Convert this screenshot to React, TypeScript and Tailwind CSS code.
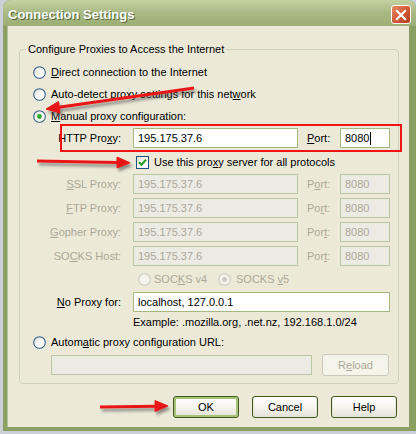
import React, { useId } from "react";

function U({ children }: { children: React.ReactNode }) {
  return <span className="underline underline-offset-[1px] decoration-1">{children}</span>;
}

function Radio({ checked = false, disabled = false }: { checked?: boolean; disabled?: boolean }) {
  const id = useId().replace(/:/g, "");
  return (
    <svg width="13" height="13" viewBox="0 0 13 13" className="shrink-0">
      <defs>
        <linearGradient id={`g${id}`} x1="0" y1="0" x2="1" y2="1">
          <stop offset="0" stopColor="#DCD9CB" />
          <stop offset="0.6" stopColor="#FFFFFF" />
          <stop offset="1" stopColor="#FFFFFF" />
        </linearGradient>
      </defs>
      <circle
        cx="6.5"
        cy="6.5"
        r="5.8"
        fill={disabled ? "#F4F3EC" : `url(#g${id})`}
        stroke={disabled ? "#CAC8BB" : "#33628A"}
        strokeWidth="1.1"
      />
      {checked && <circle cx="6.5" cy="6.5" r="2.4" fill={disabled ? "#CAC8BB" : "#2EA82E"} />}
    </svg>
  );
}

function Checkbox() {
  return (
    <svg width="13" height="13" viewBox="0 0 13 13" className="shrink-0">
      <defs>
        <linearGradient id="cbg" x1="0" y1="0" x2="1" y2="1">
          <stop offset="0" stopColor="#DCD9CB" />
          <stop offset="0.6" stopColor="#FFFFFF" />
        </linearGradient>
      </defs>
      <rect x="0.5" y="0.5" width="12" height="12" fill="url(#cbg)" stroke="#1C5180" />
      <path d="M3 6.3 L5.4 8.8 L10 3.8" fill="none" stroke="#21A121" strokeWidth="2" />
    </svg>
  );
}

function Field({ text, w, disabled = false, caret = false }: { text: string; w: string; disabled?: boolean; caret?: boolean }) {
  return (
    <div
      className={`${w} h-[20px] shrink-0 flex items-center pl-[4px] border ${
        disabled ? "bg-[#EBEBE4] border-[#B9C7A2] text-[#ACA899]" : "bg-white border-[#A4B97F] text-black"
      }`}
    >
      <span>{text}</span>
      {caret && <span className="inline-block w-[1px] h-[13px] bg-black ml-[1px]" />}
    </div>
  );
}

function Label({ children, disabled = false }: { children: React.ReactNode; disabled?: boolean }) {
  return (
    <div className={`w-[82px] shrink-0 text-right pr-[2px] ${disabled ? "text-[#ACA899]" : "text-black"}`}>{children}</div>
  );
}

function ProxyRow({
  label,
  port,
  disabled = false,
  caret = false,
  cls = "",
}: {
  label: React.ReactNode;
  port: React.ReactNode;
  disabled?: boolean;
  caret?: boolean;
  cls?: string;
}) {
  return (
    <div className={`flex items-center h-[22px] pl-[21px] ${cls}`}>
      <Label disabled={disabled}>{label}</Label>
      <div className="ml-[10px]">
        <Field text="195.175.37.6" w="w-[165px]" disabled={disabled} />
      </div>
      <div className={`ml-[9px] w-[33px] ${disabled ? "text-[#ACA899]" : "text-black"}`}>{port}</div>
      <Field text="8080" w="w-[50px]" disabled={disabled} caret={caret} />
    </div>
  );
}

function Button({ children, def = false }: { children: React.ReactNode; def?: boolean }) {
  return (
    <div
      className={`w-[66px] h-[22px] flex items-center justify-center rounded-[3px] border border-[#3F5A1C] bg-gradient-to-b from-[#FFFFFF] via-[#F6F5EF] to-[#E3E1D6] text-black ${
        def ? "shadow-[inset_0_0_0_2px_#A9C27A]" : "shadow-[inset_0_-1px_0_1px_#E6E4DA]"
      }`}
    >
      {children}
    </div>
  );
}

export default function App() {
  return (
    <div className="relative w-[416px] h-[434px] overflow-hidden bg-[#C9D0D8] font-['Liberation_Sans',Arial,sans-serif] text-[11px] leading-[13px] text-black">
      <div className="ml-[3px] w-[413px] h-[431px] flex flex-col rounded-t-[8px] bg-[#8AA063]">
        {/* Title bar */}
        <div className="h-[26px] shrink-0 flex items-start justify-between rounded-t-[8px] bg-gradient-to-b from-[#C5D1A2] via-[#A8B983] to-[#9CAE74] pl-[5px] pr-[5px]">
          <div className="pt-[7px] text-[13px] leading-[15px] font-bold text-white [text-shadow:1px_1px_0_#56693A]">
            Connection Settings
          </div>
          <div className="mt-[5px] w-[20px] h-[19px] rounded-[3px] border border-white bg-gradient-to-br from-[#E88B68] via-[#D25A37] to-[#B2401F] flex items-center justify-center">
            <svg width="12" height="12" viewBox="0 0 12 12">
              <path d="M2 2 L10 10 M10 2 L2 10" stroke="white" strokeWidth="2.2" strokeLinecap="square" />
            </svg>
          </div>
        </div>
        {/* Body */}
        <div className="ml-[4px] mr-[7px] mb-[4px] flex-1 bg-[#ECE9D8] flex flex-col pt-[16px] pl-[11px] border-l border-[#B4C49A]">
          <fieldset className="w-[380px] h-[342px] m-0 p-0 border border-[#D0D0BF] rounded-[4px] flex flex-col">
            <legend className="ml-[6px] px-[2px] leading-[14px]">Configure Proxies to Access the Internet</legend>
            <div className="flex items-center h-[22px] pl-[13px] gap-[5px] mt-[5px]">
              <Radio />
              <span>
                <U>D</U>irect connection to the Internet
              </span>
            </div>
            <div className="flex items-center h-[22px] pl-[13px] gap-[5px]">
              <Radio />
              <span>
                Auto-detect proxy settings for this net<U>w</U>ork
              </span>
            </div>
            <div className="flex items-center h-[22px] pl-[13px] gap-[5px]">
              <Radio checked />
              <span>
                <U>M</U>anual proxy configuration:
              </span>
            </div>
            <ProxyRow
              label={
                <>
                  HTTP Pro<U>x</U>y:
                </>
              }
              port={
                <>
                  <U>P</U>ort:
                </>
              }
              caret
            />
            <div className="flex items-center h-[22px] pl-[116px] gap-[5px] mt-[2px]">
              <Checkbox />
              <span>
                Use this pro<U>x</U>y server for all protocols
              </span>
            </div>
            <ProxyRow
              disabled
              label={
                <>
                  <U>S</U>SL Proxy:
                </>
              }
              port={
                <>
                  P<U>o</U>rt:
                </>
              }
            />
            <ProxyRow
              disabled
              cls="mt-[2px]"
              label={
                <>
                  <U>F</U>TP Proxy:
                </>
              }
              port={
                <>
                  Po<U>r</U>t:
                </>
              }
            />
            <ProxyRow
              disabled
              cls="mt-[2px]"
              label={
                <>
                  <U>G</U>opher Proxy:
                </>
              }
              port={
                <>
                  Por<U>t</U>:
                </>
              }
            />
            <ProxyRow
              disabled
              cls="mt-[2px]"
              label={
                <>
                  SO<U>C</U>KS Host:
                </>
              }
              port={
                <>
                  Por<U>t</U>:
                </>
              }
            />
            <div className="flex items-center h-[22px] pl-[118px] mt-[1px] text-[#ACA899]">
              <div className="w-[80px] flex items-center gap-[3px]">
                <Radio disabled />
                <span>
                  SOC<U>K</U>S v4
                </span>
              </div>
              <div className="flex items-center gap-[5px]">
                <Radio disabled checked />
                <span>
                  SOCKS <U>v</U>5
                </span>
              </div>
            </div>
            <div className="flex items-center h-[22px] pl-[21px] mt-[1px]">
              <Label>
                <U>N</U>o Proxy for:
              </Label>
              <div className="ml-[10px]">
                <Field text="localhost, 127.0.0.1" w="w-[257px]" />
              </div>
            </div>
            <div className="flex items-center h-[18px] pl-[113px]">
              Example: .mozilla.org, .net.nz, 192.168.1.0/24
            </div>
            <div className="flex items-center h-[22px] pl-[13px] gap-[5px]">
              <Radio />
              <span>
                Autom<U>a</U>tic proxy configuration URL:
              </span>
            </div>
            <div className="flex items-center h-[22px] pl-[31px] mt-[1px]">
              <Field text="" w="w-[261px]" disabled />
              <div className="ml-[10px] w-[67px] h-[22px] flex items-center justify-center rounded-[3px] border border-[#CAC8BB] bg-[#F5F4EA] text-[#ACA899]">
                R<U>e</U>load
              </div>
            </div>
          </fieldset>
          <div className="flex justify-end gap-[13px] pr-[12px] mt-[12px]">
            <Button def>OK</Button>
            <Button>Cancel</Button>
            <Button>Help</Button>
          </div>
        </div>
      </div>

      {/* Annotations */}
      <div className="absolute left-[60px] top-[124px] w-[342px] h-[28px] border-2 border-[#F01414] pointer-events-none" />
      <svg className="absolute left-0 top-0 pointer-events-none" width="416" height="434" viewBox="0 0 416 434">
        <defs>
          <filter id="sh" x="-20%" y="-50%" width="140%" height="250%">
            <feDropShadow dx="2" dy="3" stdDeviation="1.5" floodColor="#404040" floodOpacity="0.55" />
          </filter>
        </defs>
        <g filter="url(#sh)" fill="#E81818" stroke="#E81818">
          <line x1="194" y1="88" x2="57" y2="107.5" strokeWidth="3" />
          <polygon points="46,109 60,113 58.5,101.5" strokeWidth="1" />
          <line x1="37" y1="161" x2="118" y2="162.5" strokeWidth="3" />
          <polygon points="130,162.8 117,157 117,168" strokeWidth="1" />
          <line x1="100" y1="407" x2="156" y2="406.3" strokeWidth="3" />
          <polygon points="168,406 155,400.5 155,411.5" strokeWidth="1" />
        </g>
      </svg>
    </div>
  );
}
